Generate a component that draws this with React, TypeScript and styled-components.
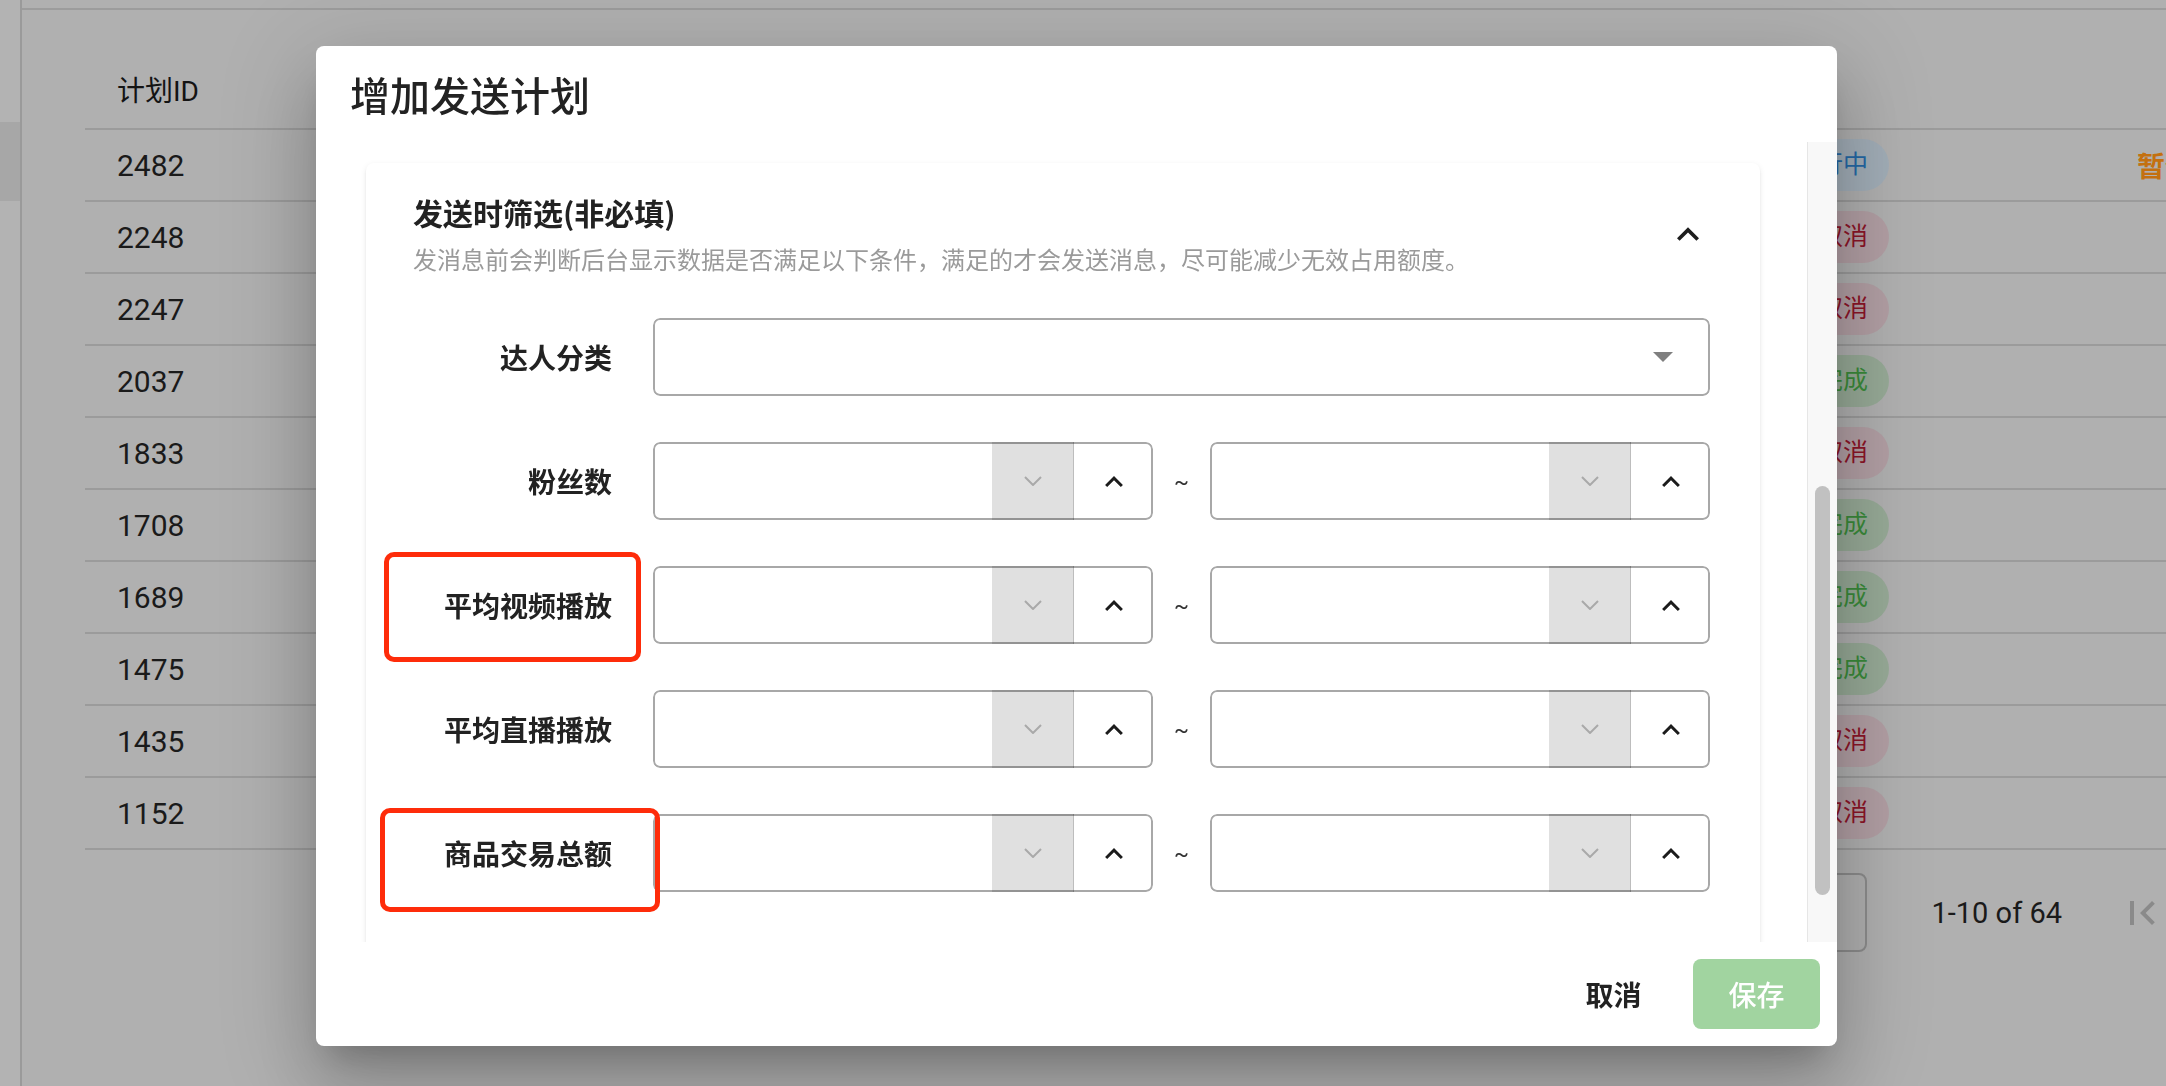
import React from 'react';
import styled, { createGlobalStyle } from 'styled-components';

type Status = 'running' | 'cancelled' | 'done';

type Mark = { left: number; top: number; width: number; height: number };

type Field = { label: string; kind: 'select' | 'range'; mark?: Mark };

const planRows: { id: string; status: Status; action?: string }[] = [
  { id: '2482', status: 'running', action: '暂停' },
  { id: '2248', status: 'cancelled' },
  { id: '2247', status: 'cancelled' },
  { id: '2037', status: 'done' },
  { id: '1833', status: 'cancelled' },
  { id: '1708', status: 'done' },
  { id: '1689', status: 'done' },
  { id: '1475', status: 'done' },
  { id: '1435', status: 'cancelled' },
  { id: '1152', status: 'cancelled' },
];

const statusLabels: Record<Status, string> = {
  running: '进行中',
  cancelled: '已取消',
  done: '已完成',
};

const filterFields: Field[] = [
  { label: '达人分类', kind: 'select' },
  { label: '粉丝数', kind: 'range' },
  { label: '平均视频播放', kind: 'range', mark: { left: -29, top: -14, width: 257, height: 110 } },
  { label: '平均直播播放', kind: 'range' },
  { label: '商品交易总额', kind: 'range', mark: { left: -33, top: -6, width: 280, height: 104 } },
];

const ExpandLessIcon = ({ width, height }: { width: number; height: number }) => (
  <svg width={width} height={height} viewBox="6 8 12 7.41" fill="currentColor">
    <path d="M12 8l-6 6 1.41 1.41L12 10.83l4.59 4.58L18 14z" />
  </svg>
);

const ThinDownIcon = () => (
  <svg width="18" height="10" viewBox="0 0 18 10" fill="none">
    <polyline points="1,1 9,9 17,1" stroke="currentColor" strokeWidth="2" />
  </svg>
);

const DropDownIcon = () => (
  <svg width="20" height="10" viewBox="7 10 10 5" fill="currentColor">
    <path d="M7 10l5 5 5-5z" />
  </svg>
);

const FirstPageIcon = () => (
  <svg width="48" height="48" viewBox="0 0 24 24" fill="currentColor">
    <path d="M18.41 16.59 13.82 12l4.59-4.59L17 6l-6 6 6 6zM6 6h2v12H6z" />
  </svg>
);

const NumberInput = () => (
  <NumberBox>
    <NumberField type="text" />
    <StepDown>
      <ThinDownIcon />
    </StepDown>
    <StepUp>
      <ExpandLessIcon width={18} height={11} />
    </StepUp>
  </NumberBox>
);

const App = () => {
  return (
    <>
      <GlobalStyle />
      <Page>
        <Sidebar>
          <SideItem />
        </Sidebar>
        <Main>
          <TopBar />
          <Table>
            <TableRow>
              <HeadCell>计划ID</HeadCell>
              <span />
              <span />
            </TableRow>
            {planRows.map((row) => (
              <TableRow key={row.id}>
                <IdCell>{row.id}</IdCell>
                <Chip $status={row.status}>{statusLabels[row.status]}</Chip>
                <ActionCell>{row.action}</ActionCell>
              </TableRow>
            ))}
          </Table>
          <Pagination>
            <PageSizeBox />
            <PageInfo>1-10 of 64</PageInfo>
            <PageButton>
              <FirstPageIcon />
            </PageButton>
          </Pagination>
        </Main>
      </Page>

      <Overlay>
        <Dialog>
          <DialogTitle>增加发送计划</DialogTitle>
          <DialogBody>
            <ScrollArea>
              <Card>
                <CardHeader>
                  <div>
                    <SectionTitle>发送时筛选(非必填)</SectionTitle>
                    <SectionHint>
                      发消息前会判断后台显示数据是否满足以下条件，满足的才会发送消息，尽可能减少无效占用额度。
                    </SectionHint>
                  </div>
                  <CollapseButton>
                    <ExpandLessIcon width={22} height={14} />
                  </CollapseButton>
                </CardHeader>
                <Form>
                  {filterFields.map((field) => (
                    <FieldRow key={field.label}>
                      <Label>
                        {field.label}
                        {field.mark && <Annotation $mark={field.mark} />}
                      </Label>
                      {field.kind === 'select' ? (
                        <SelectBox>
                          <DropDownIcon />
                        </SelectBox>
                      ) : (
                        <RangeGroup>
                          <NumberInput />
                          <Tilde>~</Tilde>
                          <NumberInput />
                        </RangeGroup>
                      )}
                    </FieldRow>
                  ))}
                </Form>
              </Card>
            </ScrollArea>
            <ScrollTrack>
              <ScrollThumb />
            </ScrollTrack>
          </DialogBody>
          <DialogActions>
            <CancelButton>取消</CancelButton>
            <SaveButton disabled>保存</SaveButton>
          </DialogActions>
        </Dialog>
      </Overlay>
    </>
  );
};

const GlobalStyle = createGlobalStyle`
  html, body {
    margin: 0;
    padding: 0;
  }
  body {
    width: 2166px;
    height: 1086px;
    overflow: hidden;
    background: #b0b0b0;
    font-family: Roboto, "Noto Sans CJK SC", sans-serif;
    color: #1a1a1a;
  }
`;

const Page = styled.div`
  display: flex;
  height: 1086px;
`;

const Sidebar = styled.nav`
  width: 22px;
  flex-shrink: 0;
  box-sizing: border-box;
  padding-top: 122px;
  background: #b3b3b3;
  border-right: 2px solid #9a9a9a;
`;

const SideItem = styled.div`
  height: 79px;
  background: #a7a7a7;
`;

const Main = styled.main`
  flex: 1;
  min-width: 0;
`;

const TopBar = styled.div`
  height: 8px;
  border-bottom: 2px solid #9c9c9c;
`;

const Table = styled.div`
  margin: 48px 0 0 63px;
`;

const TableRow = styled.div`
  display: grid;
  grid-template-columns: 1fr auto 277px;
  align-items: center;
  height: 72px;
  box-sizing: border-box;
  border-bottom: 2px solid #9b9b9b;
`;

const HeadCell = styled.div`
  padding-left: 32px;
  font-size: 28px;
  font-weight: 400;
  line-height: 1;
  margin-top: -2px;
  color: #141414;
`;

const IdCell = styled.div`
  padding-left: 32px;
  font-size: 30px;
  line-height: 1;
  margin-top: 2px;
`;

const chipColors: Record<Status, { bg: string; fg: string }> = {
  running: { bg: '#a2aeb8', fg: '#2468a6' },
  cancelled: { bg: '#b29fa4', fg: '#8c1428' },
  done: { bg: '#97aa97', fg: '#3a8a3a' },
};

const Chip = styled.span<{ $status: Status }>`
  height: 52px;
  padding: 0 21px;
  border-radius: 26px;
  font-size: 25px;
  line-height: 52px;
  background: ${(p) => chipColors[p.$status].bg};
  color: ${(p) => chipColors[p.$status].fg};
`;

const ActionCell = styled.div`
  padding-left: 248px;
  font-size: 28px;
  font-weight: 700;
  color: #c4700f;
  white-space: nowrap;
  overflow: hidden;
`;

const Pagination = styled.div`
  display: flex;
  align-items: center;
  justify-content: flex-end;
  margin-top: 23px;
  height: 79px;
`;

const PageSizeBox = styled.div`
  width: 150px;
  height: 79px;
  box-sizing: border-box;
  border: 2px solid #8c8c8c;
  border-radius: 8px;
  margin-right: 64px;
`;

const PageInfo = styled.span`
  font-size: 29px;
  color: #1a1a1a;
  margin-right: 56px;
`;

const PageButton = styled.span`
  display: flex;
  color: #8a8a8a;
`;

const Overlay = styled.div`
  position: fixed;
  inset: 0;
  display: flex;
  align-items: flex-start;
  padding: 46px 0 0 316px;
`;

const Dialog = styled.div`
  width: 1521px;
  height: 1000px;
  display: flex;
  flex-direction: column;
  background: #fff;
  border-radius: 8px;
  overflow: hidden;
  box-shadow: 0 22px 30px -14px rgba(0, 0, 0, 0.2),
    0 48px 76px 6px rgba(0, 0, 0, 0.14), 0 18px 92px 16px rgba(0, 0, 0, 0.12);
  font-family: "Noto Sans CJK SC", sans-serif;
`;

const DialogTitle = styled.h2`
  margin: 0;
  height: 96px;
  flex-shrink: 0;
  display: flex;
  align-items: center;
  padding-left: 34px;
  font-size: 40px;
  font-weight: 500;
  color: #222;
`;

const DialogBody = styled.div`
  display: flex;
  height: 800px;
  flex-shrink: 0;
`;

const ScrollArea = styled.div`
  flex: 1;
  overflow: hidden;
  padding: 21px 47px 0 50px;
`;

const ScrollTrack = styled.div`
  width: 30px;
  box-sizing: border-box;
  background: #f8f8f8;
  border-left: 1px solid #e6e6e6;
`;

const ScrollThumb = styled.div`
  margin: 344px 0 0 7px;
  width: 15px;
  height: 409px;
  border-radius: 8px;
  background: #c1c1c1;
`;

const Card = styled.section`
  background: #fff;
  border-radius: 8px;
  padding: 27px 50px 160px 47px;
  box-shadow: 0 4px 2px -2px rgba(0, 0, 0, 0.12),
    0 2px 2px 0 rgba(0, 0, 0, 0.08), 0 2px 6px 0 rgba(0, 0, 0, 0.08);
`;

const CardHeader = styled.div`
  display: flex;
  align-items: center;
  justify-content: space-between;
`;

const SectionTitle = styled.h3`
  margin: 0;
  font-size: 30px;
  font-weight: 600;
  line-height: 45px;
  color: #222;
`;

const SectionHint = styled.p`
  margin: 6px 0 0;
  font-size: 24px;
  line-height: 36px;
  color: #9a9a9a;
`;

const CollapseButton = styled.span`
  width: 44px;
  height: 44px;
  display: flex;
  align-items: center;
  justify-content: center;
  color: #1e1e1e;
`;

const Form = styled.div`
  display: grid;
  row-gap: 46px;
  margin-top: 41px;
`;

const FieldRow = styled.div`
  display: grid;
  grid-template-columns: 199px 1fr;
  column-gap: 41px;
  align-items: center;
  height: 78px;
`;

const Label = styled.label`
  position: relative;
  text-align: right;
  font-size: 28px;
  font-weight: 600;
  color: #222;
`;

const Annotation = styled.span<{ $mark: Mark }>`
  position: absolute;
  z-index: 2;
  left: ${(p) => p.$mark.left}px;
  top: ${(p) => p.$mark.top - 19}px;
  width: ${(p) => p.$mark.width}px;
  height: ${(p) => p.$mark.height}px;
  box-sizing: border-box;
  border: 5px solid #fe2c0a;
  border-radius: 10px;
`;

const OutlinedBox = styled.div`
  position: relative;
  height: 78px;
  border-radius: 7px;
  overflow: hidden;

  &::after {
    content: '';
    position: absolute;
    inset: 0;
    border: 2px solid rgba(0, 0, 0, 0.34);
    border-radius: 7px;
    pointer-events: none;
  }
`;

const SelectBox = styled(OutlinedBox)`
  display: flex;
  align-items: center;
  justify-content: flex-end;
  padding-right: 37px;
  color: #7f7f7f;
`;

const RangeGroup = styled.div`
  display: grid;
  grid-template-columns: 1fr 57px 1fr;
  align-items: center;
`;

const NumberBox = styled(OutlinedBox)`
  display: flex;
`;

const NumberField = styled.input`
  flex: 1;
  min-width: 0;
  border: none;
  outline: none;
  background: transparent;
  padding: 0 20px;
  font: inherit;
  font-size: 28px;
`;

const StepDown = styled.span`
  width: 81px;
  display: flex;
  align-items: center;
  justify-content: center;
  background: #e0e0e0;
  color: #a9a9a9;
`;

const StepUp = styled.span`
  width: 79px;
  display: flex;
  align-items: center;
  justify-content: center;
  border-left: 1px solid #bdbdbd;
  color: #1c1c1c;
`;

const Tilde = styled.span`
  text-align: center;
  font-family: Roboto, sans-serif;
  font-size: 22px;
  color: #333;
`;

const DialogActions = styled.div`
  height: 104px;
  flex-shrink: 0;
  display: flex;
  align-items: center;
  justify-content: flex-end;
  gap: 16px;
  padding-right: 17px;
`;

const CancelButton = styled.button`
  width: 127px;
  height: 70px;
  border: none;
  background: none;
  font: inherit;
  font-size: 28px;
  font-weight: 600;
  color: #222;
  cursor: pointer;
`;

const SaveButton = styled.button`
  width: 127px;
  height: 70px;
  border: none;
  border-radius: 8px;
  background: #a1d4a0;
  font: inherit;
  font-size: 28px;
  font-weight: 500;
  color: #fff;
`;

export default App;
